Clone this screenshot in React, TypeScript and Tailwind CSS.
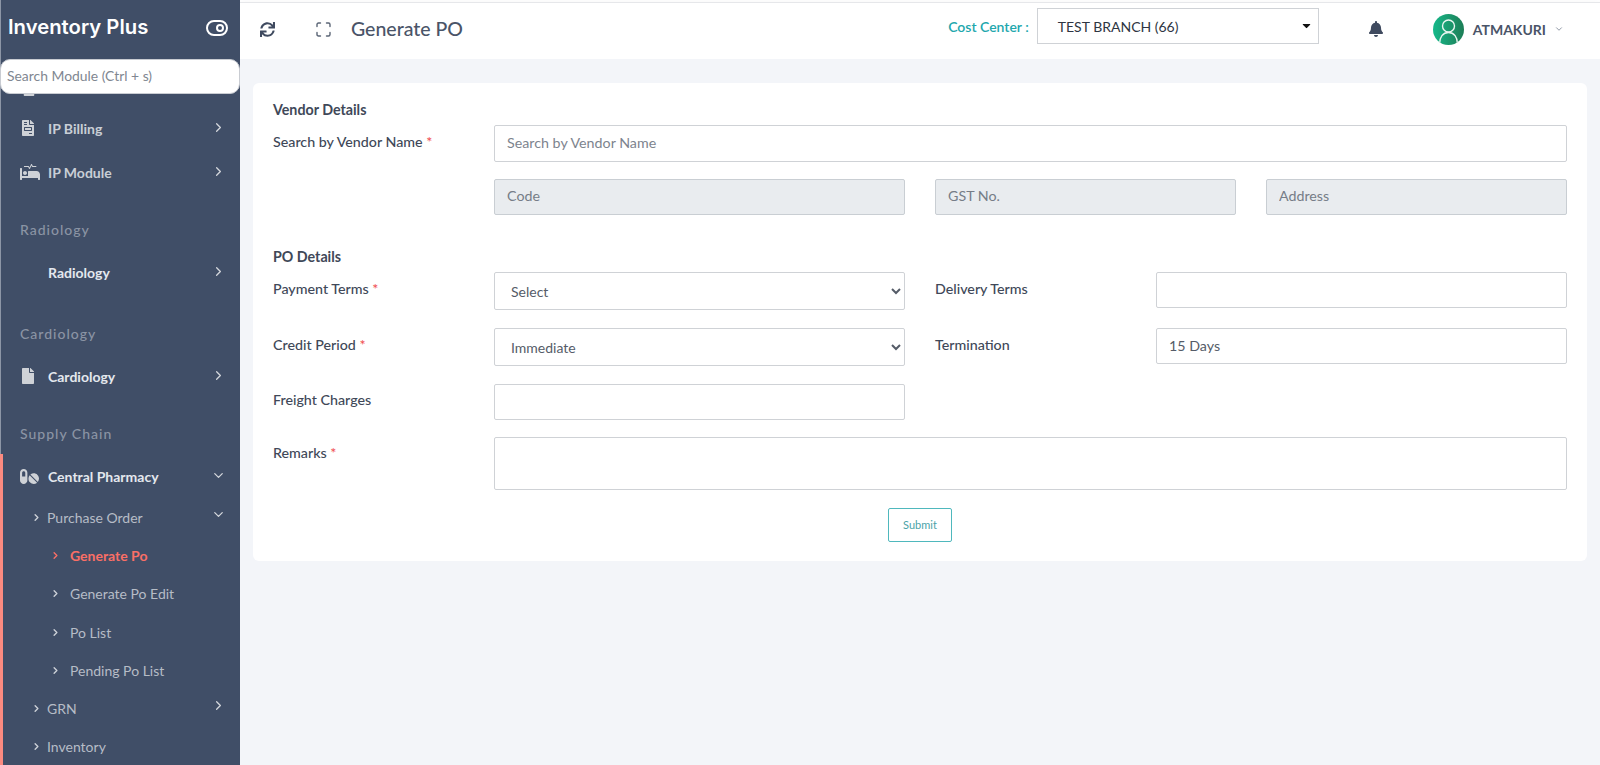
import { ChevronDown, ChevronRight, ToggleRight } from "lucide-react";
import type { ReactNode } from "react";
import {
  FaBell,
  FaCaretDown,
  FaFile,
  FaFileInvoice,
  FaPills,
  FaProcedures,
  FaSync,
} from "react-icons/fa";

const TopItem = ({
  icon,
  label,
  open,
  bright,
}: {
  icon?: ReactNode;
  label: string;
  open?: boolean;
  bright?: boolean;
}) => (
  <div className="flex h-[44px] items-center pl-[20px] pr-[14px]">
    <span className="flex w-[28px] items-center text-[#cfd2d7]">{icon}</span>
    <span
      className={`text-[14px] font-bold ${bright ? "text-[#e4e8ee]" : "text-[#c9ced6]"}`}
    >
      {label}
    </span>
    <span className="ml-auto -translate-y-[1px] text-[#d5d8dd]">
      {open ? <ChevronDown size={15} /> : <ChevronRight size={15} />}
    </span>
  </div>
);

const SectionTitle = ({ label, className }: { label: string; className: string }) => (
  <div
    className={`flex h-[40px] items-center pl-[20px] text-[14px] font-medium tracking-[1px] text-[#8b94a4] ${className}`}
  >
    {label}
  </div>
);

const SubItem = ({
  label,
  depth,
  active,
  arrow,
}: {
  label: string;
  depth: 1 | 2;
  active?: boolean;
  arrow?: "right" | "down";
}) => (
  <div
    className={`flex h-[38.3px] items-center pr-[14px] ${depth === 1 ? "pl-[31px]" : "pl-[50px]"}`}
  >
    <span
      className={`${depth === 1 ? "w-[16px]" : "w-[20px]"} ${active ? "text-[#fa6f66]" : "text-[#cdd1d8]"}`}
    >
      <ChevronRight size={11} strokeWidth={3} />
    </span>
    <span
      className={`text-[14px] ${active ? "font-bold text-[#fa6f66]" : "text-[#b6bcc6]"}`}
    >
      {label}
    </span>
    {arrow && (
      <span className="ml-auto -translate-y-[3px] text-[#d5d8dd]">
        {arrow === "down" ? <ChevronDown size={15} /> : <ChevronRight size={15} />}
      </span>
    )}
  </div>
);

const Sidebar = () => (
  <aside className="relative h-[765px] w-[240px] shrink-0 overflow-hidden bg-[#404e67] shadow-[inset_1px_0_0_#8d96a6]">
    <div className="flex h-[59px] items-center justify-between pb-[4px] pl-[8px] pr-[11px]">
      <span className="font-['Inter',sans-serif] text-[20.3px] font-semibold text-white">
        Inventory Plus
      </span>
      <ToggleRight size={24} className="text-white" />
    </div>
    <div className="relative z-10 flex h-[35px] w-[240px] items-center rounded-[10px] border border-[#c9ccd2] bg-white pl-[6px] text-[13.9px] text-[#7f8791]">
      Search Module (Ctrl + s)
    </div>
    <div className="h-[12px] overflow-hidden pl-[22px] text-[#cfd2d7]">
      <FaFile size={14} className="-mt-[12px]" />
    </div>
    <TopItem label="IP Billing" icon={<FaFileInvoice size={16} />} />
    <TopItem label="IP Module" icon={<FaProcedures size={20} />} />
    <SectionTitle label="Radiology" className="mt-[15px]" />
    <div className="mt-px">
      <TopItem label="Radiology" bright />
    </div>
    <SectionTitle label="Cardiology" className="mt-[19px]" />
    <div className="mt-px">
      <TopItem label="Cardiology" bright icon={<FaFile size={16} />} />
    </div>
    <SectionTitle label="Supply Chain" className="mb-px mt-[15px]" />
    <div className="border-l-[3px] border-[#fb8a80]">
      <div className="-ml-[3px]">
        <TopItem label="Central Pharmacy" bright open icon={<FaPills size={19} />} />
        <SubItem label="Purchase Order" depth={1} arrow="down" />
        <SubItem label="Generate Po" depth={2} active />
        <SubItem label="Generate Po Edit" depth={2} />
        <SubItem label="Po List" depth={2} />
        <SubItem label="Pending Po List" depth={2} />
        <SubItem label="GRN" depth={1} arrow="right" />
        <SubItem label="Inventory" depth={1} />
      </div>
    </div>
  </aside>
);

const Header = () => (
  <header className="mt-[2px] flex h-[57px] shrink-0 items-center border-t border-[#e6e7ea] bg-white pb-[4px] pl-[20px] shadow-[0_2px_8px_rgba(60,70,90,0.08)]">
    <FaSync size={15} className="text-[#3f4a5f]" />
    <svg
      width="15"
      height="15"
      viewBox="0 0 15 15"
      fill="none"
      stroke="#5b6576"
      strokeWidth="1.4"
      strokeLinecap="round"
      className="ml-[41px]"
    >
      <path d="M1 4.5V2.5C1 1.6 1.6 1 2.5 1H4.5M10.5 1H12.5C13.4 1 14 1.6 14 2.5V4.5M14 10.5V12.5C14 13.4 13.4 14 12.5 14H10.5M4.5 14H2.5C1.6 14 1 13.4 1 12.5V10.5" />
    </svg>
    <h1 className="ml-[20px] text-[19.5px] font-medium text-[#4a5468]">Generate PO</h1>
    <span className="mb-[5px] ml-auto text-[14px] font-semibold text-[#22a7ad]">Cost Center :</span>
    <div className="mb-[7px] ml-[8px] flex h-[36px] w-[282px] items-center justify-between border border-[#cfd2d6] pl-[20px] pr-[5px] text-[14px] text-[#2e3542]">
      <span className="pt-[1px]">TEST BRANCH (66)</span>
      <FaCaretDown size={13} className="text-[#111]" />
    </div>
    <FaBell size={16} className="ml-[49px] text-[#3f4a5f]" />
    <div className="ml-[49px] flex h-[31px] w-[31px] items-end justify-center overflow-hidden rounded-full bg-gradient-to-r from-[#14b98a] to-[#1c7d56]">
      <svg
        width="25"
        height="28"
        viewBox="0 0 25 28"
        fill="none"
        stroke="#e8f5f0"
        strokeWidth="1.4"
        strokeLinecap="round"
      >
        <circle cx="12.5" cy="9" r="6" />
        <path d="M3.5 27C3.5 20 7 15.5 12.5 15.5C18 15.5 21.5 20 21.5 27" />
      </svg>
    </div>
    <span className="ml-[9px] text-[14px] font-bold text-[#4a5468]">ATMAKURI</span>
    <ChevronDown size={10} className="ml-[8px] mr-[36px] text-[#7b8494]" />
  </header>
);

const Req = () => <span className="text-[#ef4d4d]"> *</span>;

const Label = ({ children, className }: { children: ReactNode; className: string }) => (
  <label className={`shrink-0 text-[14.25px] font-medium leading-[20px] text-[#404858] ${className}`}>
    {children}
  </label>
);

const fieldClass =
  "block rounded-[2px] border border-[#cfd2d6] bg-white px-[12px] pb-[2px] text-[14.25px] text-[#555c68] placeholder:text-[#7d848e] outline-none";
const lockedClass =
  "block h-[36px] rounded-[2px] border border-[#c9ced3] bg-[#e9ecef] px-[12px] pb-[3px] text-[14.25px] placeholder:text-[#767d87] outline-none";
const selectClass =
  "block h-[38px] w-[411px] rounded-[2px] border border-[#cfd2d6] bg-white px-[12px] text-[14px] text-[#555c68] outline-none";

const GeneratePoForm = () => (
  <section className="mx-[13px] mt-[24px] h-[478px] rounded-[6px] bg-white px-[20px] pt-[17px] pb-[20px]">
    <h2 className="text-[14.25px] font-bold leading-[20px] text-[#404858]">Vendor Details</h2>
    <div className="mt-[5px] flex">
      <Label className="mt-[7px] w-[221px]">
        Search by Vendor Name
        <Req />
      </Label>
      <input placeholder="Search by Vendor Name" className={`${fieldClass} h-[37px] w-[1073px]`} />
    </div>
    <div className="mt-[17px] flex pl-[221px]">
      <input disabled placeholder="Code" className={`${lockedClass} w-[411px]`} />
      <input disabled placeholder="GST No." className={`${lockedClass} ml-[30px] w-[301px]`} />
      <input disabled placeholder="Address" className={`${lockedClass} ml-[30px] w-[301px]`} />
    </div>
    <h2 className="mt-[32px] text-[14.25px] font-bold leading-[20px] text-[#404858]">PO Details</h2>
    <div className="mt-[5px] flex">
      <Label className="mt-[7px] w-[221px]">
        Payment Terms
        <Req />
      </Label>
      <select defaultValue="Select" className={selectClass}>
        <option>Select</option>
      </select>
      <Label className="ml-[30px] mt-[7px] w-[221px]">Delivery Terms</Label>
      <input className={`${fieldClass} h-[36px] w-[411px]`} />
    </div>
    <div className="mt-[18px] flex">
      <Label className="mt-[7px] w-[221px]">
        Credit Period
        <Req />
      </Label>
      <select defaultValue="Immediate" className={selectClass}>
        <option>Immediate</option>
      </select>
      <Label className="ml-[30px] mt-[7px] w-[221px]">Termination</Label>
      <input defaultValue="15 Days" className={`${fieldClass} h-[36px] w-[411px]`} />
    </div>
    <div className="mt-[18px] flex">
      <Label className="mt-[6px] w-[221px]">Freight Charges</Label>
      <input className={`${fieldClass} h-[36px] w-[411px]`} />
    </div>
    <div className="mt-[17px] flex">
      <Label className="mt-[6px] w-[221px]">
        Remarks
        <Req />
      </Label>
      <textarea className={`${fieldClass} h-[53px] w-[1073px] resize-none`} />
    </div>
    <div className="mt-[18px] flex justify-center">
      <button className="h-[34px] w-[64px] rounded-[2px] border border-[#4fb8bd] bg-white text-[11px] text-[#4aa3a8]">
        Submit
      </button>
    </div>
  </section>
);

export default function App() {
  return (
    <div className="flex h-[765px] w-[1600px] overflow-hidden bg-white font-['Lato',sans-serif]">
      <Sidebar />
      <main className="flex min-w-0 flex-1 flex-col">
        <Header />
        <div className="flex-1 bg-[#f3f5f9]">
          <GeneratePoForm />
        </div>
      </main>
    </div>
  );
}
